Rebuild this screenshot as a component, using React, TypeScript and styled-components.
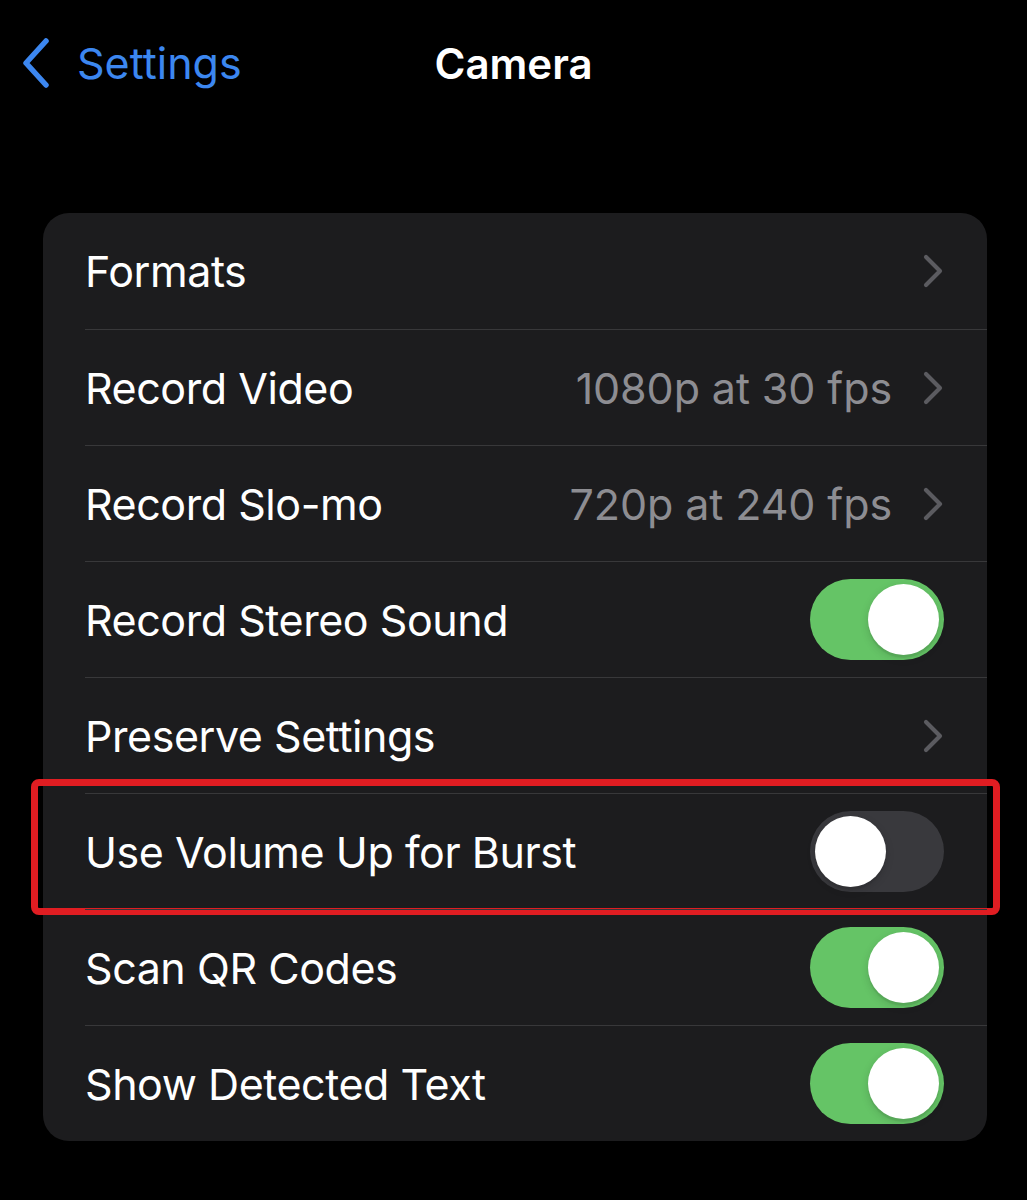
import React from "react";
import styled, { createGlobalStyle } from "styled-components";

const GlobalStyle = createGlobalStyle`
  html, body { margin: 0; padding: 0; background: #000; }
  body { font-family: Inter, "Noto Sans", "Liberation Sans", sans-serif; -webkit-font-smoothing: antialiased; }
`;

const Page = styled.div`
  width: 1027px;
  min-height: 1200px;
  background: #000;
  display: flex;
  flex-direction: column;
`;

const NavBar = styled.div`
  height: 126px;
  display: grid;
  grid-template-columns: 1fr auto 1fr;
  align-items: center;
`;

const BackButton = styled.div`
  display: flex;
  align-items: center;
  gap: 27px;
  padding-left: 22px;
  color: #3c87f0;
  font-size: 43px;
  letter-spacing: 0px;
`;

const Title = styled.div`
  color: #fff;
  font-size: 42px;
  font-weight: 600;
  letter-spacing: 0px;
`;

const Card = styled.div`
  margin: 87px 0 0 43px;
  width: 944px;
  background: #1c1c1e;
  border-radius: 26px;
`;

const Row = styled.div`
  position: relative;
  padding-left: 42px;
`;

const RowInner = styled.div<{ $first?: boolean }>`
  height: 116px;
  box-sizing: border-box;
  display: flex;
  align-items: center;
  padding-right: 43px;
  border-top: ${(p) => (p.$first ? "none" : "1px solid #38383a")};
`;

const Label = styled.div`
  flex: 1;
  color: #fff;
  font-size: 43px;
  letter-spacing: -0.45px;
`;

const Value = styled.div`
  color: #8d8d92;
  font-size: 43px;
  letter-spacing: -0.1px;
  margin-right: 30px;
`;

const Track = styled.div<{ $on: boolean }>`
  width: 134px;
  height: 81px;
  border-radius: 41px;
  background: ${(p) => (p.$on ? "#65c466" : "#39393d")};
  display: flex;
  align-items: center;
  justify-content: ${(p) => (p.$on ? "flex-end" : "flex-start")};
  padding: 0 5px;
  box-sizing: border-box;
`;

const Knob = styled.div`
  width: 71px;
  height: 71px;
  border-radius: 50%;
  background: #fff;
  box-shadow: 0 3px 8px rgba(0, 0, 0, 0.15), 0 3px 1px rgba(0, 0, 0, 0.06);
`;

const Highlight = styled.div`
  position: absolute;
  top: -14px;
  bottom: -6px;
  left: -12px;
  right: -13px;
  border: 7px solid #e01d22;
  border-radius: 8px;
  pointer-events: none;
`;

const Chevron = () => (
  <svg width="22" height="34" viewBox="0 0 22 34" fill="none">
    <path d="M4 3 L18 17 L4 31" stroke="#5b5b60" strokeWidth="4.2" strokeLinecap="round" strokeLinejoin="round" />
  </svg>
);

const BackChevron = () => (
  <svg width="28" height="50" viewBox="0 0 28 50" fill="none">
    <path d="M24 3 L4 25 L24 47" stroke="#3c87f0" strokeWidth="5.5" strokeLinecap="round" strokeLinejoin="round" />
  </svg>
);

type Item =
  | { label: string; kind: "link"; value?: string }
  | { label: string; kind: "toggle"; on: boolean; highlight?: boolean };

const items: Item[] = [
  { label: "Formats", kind: "link" },
  { label: "Record Video", kind: "link", value: "1080p at 30 fps" },
  { label: "Record Slo-mo", kind: "link", value: "720p at 240 fps" },
  { label: "Record Stereo Sound", kind: "toggle", on: true },
  { label: "Preserve Settings", kind: "link" },
  { label: "Use Volume Up for Burst", kind: "toggle", on: false, highlight: true },
  { label: "Scan QR Codes", kind: "toggle", on: true },
  { label: "Show Detected Text", kind: "toggle", on: true },
];

export default function App() {
  return (
    <>
      <GlobalStyle />
      <Page>
        <NavBar>
          <BackButton>
            <BackChevron />
            <span>Settings</span>
          </BackButton>
          <Title>Camera</Title>
          <div />
        </NavBar>
        <Card>
          {items.map((it, i) => (
            <Row key={it.label}>
              <RowInner $first={i === 0}>
                <Label>{it.label}</Label>
                {it.kind === "link" ? (
                  <>
                    {it.value && <Value>{it.value}</Value>}
                    <Chevron />
                  </>
                ) : (
                  <Track $on={it.on}>
                    <Knob />
                  </Track>
                )}
              </RowInner>
              {it.kind === "toggle" && it.highlight && <Highlight />}
            </Row>
          ))}
        </Card>
      </Page>
    </>
  );
}
